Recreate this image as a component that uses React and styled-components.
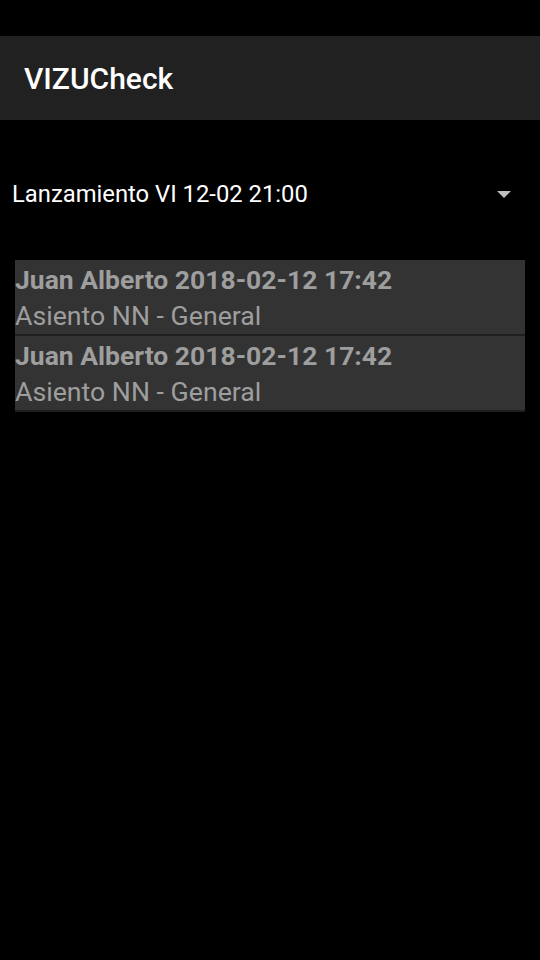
import React from 'react';
import styled, { createGlobalStyle } from 'styled-components';

const GlobalStyle = createGlobalStyle`
  html, body {
    margin: 0;
    padding: 0;
    background: #000;
  }
  body {
    font-family: Roboto, 'Liberation Sans', sans-serif;
  }
`;

const entries = [
  { id: 1, name: 'Juan Alberto', date: '2018-02-12 17:42', seat: 'Asiento NN - General' },
  { id: 2, name: 'Juan Alberto', date: '2018-02-12 17:42', seat: 'Asiento NN - General' },
];

const App = () => {
  return (
    <Root>
      <GlobalStyle />
      <StatusBar />
      <Toolbar>
        <Title>VIZUCheck</Title>
      </Toolbar>
      <Spinner>
        <SpinnerText>Lanzamiento VI 12-02 21:00</SpinnerText>
        <Arrow />
      </Spinner>
      <List>
        {entries.map((e) => (
          <Row key={e.id}>
            <RowTitle>
              {e.name} {e.date}
            </RowTitle>
            <RowSub>{e.seat}</RowSub>
          </Row>
        ))}
      </List>
    </Root>
  );
};

export default App;

const Root = styled.div`
  width: 540px;
  height: 960px;
  background: #000;
  display: flex;
  flex-direction: column;
  overflow: hidden;
`;

const StatusBar = styled.div`
  height: 36px;
  background: #000;
`;

const Toolbar = styled.div`
  height: 84px;
  background: #212121;
  display: flex;
  align-items: center;
  padding-left: 24px;
`;

const Title = styled.div`
  color: #fff;
  font-size: 30px;
  font-weight: 500;
  margin-top: 1px;
`;

const Spinner = styled.div`
  display: flex;
  align-items: center;
  justify-content: space-between;
  height: 48px;
  margin-top: 50px;
  padding: 0 29px 0 12px;
`;

const SpinnerText = styled.div`
  color: #fff;
  font-size: 23.8px;
`;

const Arrow = styled.div`
  width: 0;
  height: 0;
  border-left: 7px solid transparent;
  border-right: 7px solid transparent;
  border-top: 7px solid #bdbdbd;
  margin-top: 1px;
`;

const List = styled.div`
  margin: 42px 15px 0 15px;
  display: flex;
  flex-direction: column;
`;

const Row = styled.div`
  background: #333333;
  border-bottom: 2px solid #1f1f1f;
  padding: 4px 0 0 0;
  height: 76px;
  box-sizing: border-box;
  display: flex;
  flex-direction: column;
  gap: 6px;
`;

const RowTitle = styled.div`
  color: #9e9e9e;
  font-size: 26.5px;
  font-weight: 700;
  line-height: 31px;
`;

const RowSub = styled.div`
  color: #9e9e9e;
  font-size: 26.7px;
  line-height: 31px;
`;
